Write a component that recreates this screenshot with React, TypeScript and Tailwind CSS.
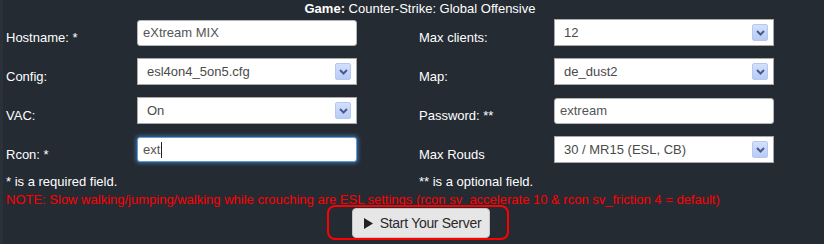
import React from "react";

function Arrow() {
  return (
    <div className="ml-auto mr-[5px] flex h-[17px] w-[16px] items-center justify-center rounded-[2px] border border-[#b7c8f0] bg-gradient-to-b from-[#d3e0fd] to-[#b8cbf7]">
      <svg width="9" height="6" viewBox="0 0 9 6">
        <path d="M1 1 L4.5 4.5 L8 1" stroke="#4a5d86" strokeWidth="2" fill="none" />
      </svg>
    </div>
  );
}

function Select({ value }: { value: string }) {
  return (
    <div className="flex h-[27px] w-[220px] items-center border border-[#a9a9a9] bg-white pl-[9px] text-[#4a4a4a]">
      <span>{value}</span>
      <Arrow />
    </div>
  );
}

function TextInput({ value, focused }: { value: string; focused?: boolean }) {
  return (
    <div
      className={
        focused
          ? "flex h-[25px] w-[220px] items-center rounded-[3px] border border-[#5c9ee0] bg-white pl-[5px] text-[#555] shadow-[0_0_4px_1px_rgba(90,160,230,0.6)]"
          : "flex h-[26px] w-[220px] items-center rounded-[3px] border border-[#b5b5b5] bg-white pl-[5px] text-[#555]"
      }
    >
      <span>{value}</span>
      {focused ? <span className="ml-[1px] h-[16px] w-[1px] bg-[#222]" /> : null}
    </div>
  );
}

function Label({ children }: { children: React.ReactNode }) {
  return <div className="pt-[10px] leading-[15px] text-white">{children}</div>;
}

export default function App() {
  return (
    <div
      className="flex h-[244px] w-[824px] flex-col overflow-hidden border-l-[3px] border-[#2b3139] bg-[#252b33] text-[13px] text-white"
      style={{ fontFamily: '"Liberation Sans", Arial, sans-serif' }}
    >
      <div className="h-[13px] pl-[13px] pt-[1px] text-center leading-[15px]">
        <b>Game:</b> Counter-Strike: Global Offensive
      </div>
      <div className="grid grid-cols-[131px_220px_62px_135px_220px] pl-[3px]">
        <div className="col-span-5 grid h-[39px] grid-cols-subgrid items-center">
          <Label>Hostname: *</Label>
          <TextInput value="eXtream MIX" />
          <div />
          <Label>Max clients:</Label>
          <Select value="12" />
        </div>
        <div className="col-span-5 grid h-[39px] grid-cols-subgrid items-center">
          <Label>Config:</Label>
          <Select value="esl4on4_5on5.cfg" />
          <div />
          <Label>Map:</Label>
          <Select value="de_dust2" />
        </div>
        <div className="col-span-5 grid h-[39px] grid-cols-subgrid items-center">
          <Label>VAC:</Label>
          <Select value="On" />
          <div />
          <Label>Password: **</Label>
          <TextInput value="extream" />
        </div>
        <div className="col-span-5 grid h-[39px] grid-cols-subgrid items-center">
          <Label>Rcon: *</Label>
          <TextInput value="ext" focused />
          <div />
          <Label>Max Rouds</Label>
          <Select value="30 / MR15 (ESL, CB)" />
        </div>
      </div>
      <div className="mt-[4px] grid h-[18px] grid-cols-[413px_1fr] pl-[3px] leading-[18px]">
        <div>* is a required field.</div>
        <div>** is a optional field.</div>
      </div>
      <div className="h-[14px] pl-[3px] leading-[18px] text-[#ff0000]">
        NOTE: Slow walking/jumping/walking while crouching are ESL settings (rcon sv_accelerate 10 &amp; rcon sv_friction 4 = default)
      </div>
      <div className="flex justify-center pl-[9px]">
        <div className="flex h-[35px] w-[182px] items-start rounded-[8px] border-2 border-[#ff0000] pl-[23px] pt-[1px]">
          <div className="flex h-[30px] w-[138px] items-center justify-center gap-[7px] rounded-[4px] border border-[#c4c4c4] bg-[#e6e6e6] pl-[3px] text-[14px] tracking-[-0.3px] text-[#2a2a2a]">
            <svg width="9" height="11" viewBox="0 0 9 11">
              <path d="M0 0 L9 5.5 L0 11 Z" fill="#222" />
            </svg>
            <span>Start Your Server</span>
          </div>
        </div>
      </div>
    </div>
  );
}
